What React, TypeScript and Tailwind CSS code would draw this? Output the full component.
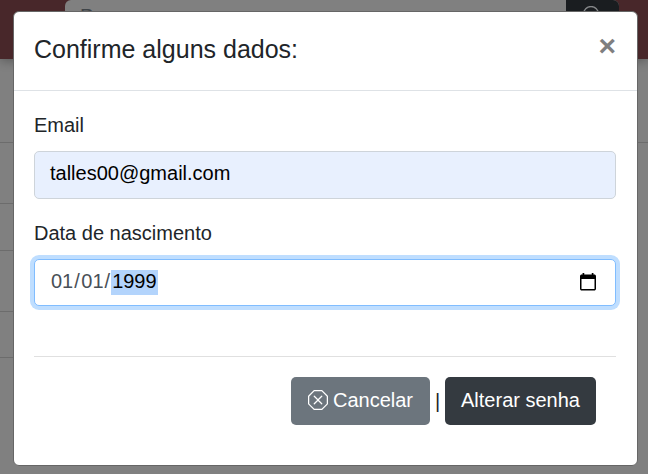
const rules = [
  'h-[84px] w-full',
  'h-[61px] w-[600px]',
  'h-[47px] w-[600px]',
  'h-[61px] w-[600px]',
  'h-[46px] w-[600px]',
];

function Backdrop() {
  return (
    <div className="h-[474px] overflow-hidden bg-[#808080]">
      <header className="relative z-10 flex h-[59px] items-start bg-[#48272a] shadow-[0_2px_10px_rgba(0,0,0,0.3)]">
        <div className="ml-[65px] flex h-[40px] w-[554px] rounded-md bg-[#808080]">
          <span className="flex-1 pl-[15px] pt-[5px] text-[20px] leading-[23px] text-[#3f4448]">P</span>
          <span className="flex w-[53px] justify-center rounded-tr-md bg-[#1a1d20] pt-[6px]">
            <svg width="20" height="20" viewBox="0 0 20 20" fill="none" stroke="#858789" strokeWidth="1.3" className="-ml-[4px]">
              <circle cx="10" cy="8" r="7.5" />
              <path d="m15 14 4 5" />
            </svg>
          </span>
        </div>
      </header>
      {rules.map((size, i) => (
        <div key={i} className={`${size} border-b border-[#6c6c6c]`} />
      ))}
    </div>
  );
}

function CalendarIcon() {
  return (
    <svg width="16" height="18" viewBox="0 0 16 18" className="-mt-[2px] block" fill="none">
      <path d="M3.4 0v3M12.6 0v3" stroke="#000" strokeWidth="1.7" />
      <path d="M1.8 1.6h12.4c1 0 1.8.7 1.8 1.7v12.5c0 1-.8 1.8-1.8 1.8H1.8C.8 17.6 0 16.8 0 15.8V3.3c0-1 .8-1.7 1.8-1.7ZM1.5 5.9v10.2h13v-10.2Z" fill="#000" fillRule="evenodd" />
    </svg>
  );
}

function OctagonXIcon() {
  return (
    <svg width="20" height="20" viewBox="0 0 16 16" fill="currentColor">
      <path d="M4.54.146A.5.5 0 0 1 4.893 0h6.214a.5.5 0 0 1 .353.146l4.394 4.394a.5.5 0 0 1 .146.353v6.214a.5.5 0 0 1-.146.353l-4.394 4.394a.5.5 0 0 1-.353.146H4.893a.5.5 0 0 1-.353-.146L.146 11.46A.5.5 0 0 1 0 11.107V4.893a.5.5 0 0 1 .146-.353zM5.1 1 1 5.1v5.8L5.1 15h5.8l4.1-4.1V5.1L10.9 1z" />
      <path d="M4.646 4.646a.5.5 0 0 1 .708 0L8 7.293l2.646-2.647a.5.5 0 0 1 .708.708L8.707 8l2.647 2.646a.5.5 0 0 1-.708.708L8 8.707l-2.646 2.647a.5.5 0 0 1-.708-.708L7.293 8 4.646 5.354a.5.5 0 0 1 0-.708" />
    </svg>
  );
}

export default function App() {
  return (
    <div className="relative h-[474px] w-[648px] overflow-hidden font-['Liberation_Sans',Arial,sans-serif] text-[20px] leading-[30px] text-[#212529]">
      <Backdrop />
      <section
        role="dialog"
        className="absolute left-[13px] top-[11px] z-20 h-[455px] w-[625px] rounded-md border border-[#666] bg-white"
      >
        <header className="flex h-[79px] items-start justify-between border-b border-[#dee2e6] pl-5 pr-[21px] pt-[19px]">
          <h5 className="text-[25px] leading-[37px]">Confirme alguns dados:</h5>
          <button aria-label="Fechar" className="text-[30px] font-bold leading-[30px] text-[#7f7f7f]">×</button>
        </header>
        <form className="pl-5 pr-[21px] pt-[19px]">
          <label className="block">Email</label>
          <div className="mt-[11px] flex h-12 items-center rounded-[5px] border border-[#ced4da] bg-[#e8f0fe] px-[15px] pb-[4px] text-black">
            talles00@gmail.com
          </div>
          <label className="mt-[19px] block">Data de nascimento</label>
          <div className="mt-[11px] flex h-[47px] items-center justify-between rounded-[5px] border border-[#80bdff] bg-white pl-4 pr-[19px] text-[#495057] shadow-[0_0_0_4px_#bfdeff]">
            <span className="flex h-[25px] leading-[23px]">
              <span>01</span>
              <span className="pl-[1px] pr-[1.5px]">/</span>
              <span>01</span>
              <span className="pl-[1px] pr-[1px]">/</span>
              <span className="bg-[#b3d4fc] pl-[1px] pr-[1.5px] text-black">1999</span>
            </span>
            <CalendarIcon />
          </div>
          <hr className="mt-[50px] border-[#e0e0e0]" />
          <div className="mt-5 flex items-center justify-end pr-5">
            <button className="flex h-12 w-[139px] items-center justify-center gap-[5px] rounded-[5px] bg-[#6c757d] pb-[2px] text-white">
              <OctagonXIcon />
              Cancelar
            </button>
            <span className="w-[15px] pb-[1px] text-center">|</span>
            <button className="h-12 w-[151px] rounded-[5px] bg-[#343a40] pb-[3px] text-white">Alterar senha</button>
          </div>
        </form>
      </section>
    </div>
  );
}
